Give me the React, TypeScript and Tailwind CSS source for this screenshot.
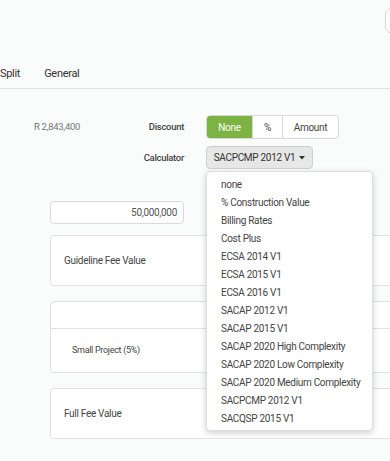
import { useState } from "react";

const calculators = [
  "none",
  "% Construction Value",
  "Billing Rates",
  "Cost Plus",
  "ECSA 2014 V1",
  "ECSA 2015 V1",
  "ECSA 2016 V1",
  "SACAP 2012 V1",
  "SACAP 2015 V1",
  "SACAP 2020 High Complexity",
  "SACAP 2020 Low Complexity",
  "SACAP 2020 Medium Complexity",
  "SACPCMP 2012 V1",
  "SACQSP 2015 V1",
];

const discountModes = ["None", "%", "Amount"];

export default function App() {
  const [discount, setDiscount] = useState("None");
  const [calculator, setCalculator] = useState("SACPCMP 2012 V1");

  return (
    <div
      className="relative h-[461px] w-[390px] overflow-hidden bg-[#fafbfb] tracking-[-0.3px] text-[#3c3c3c]"
      style={{ fontFamily: "Roboto, 'Noto Sans', sans-serif" }}
    >
      {/* header strip */}
      <div className="flex h-[60px] justify-end pt-2">
        <div className="h-[25px] w-[20px] -mr-[15px] rounded-md border border-[#d6d6d6] bg-white" />
      </div>

      <nav className="flex h-[29px] items-start gap-[24px] border-b border-[#e3e3e3] text-[11px] text-[#333]">
        <span className="pt-[6px]">Split</span>
        <span className="pt-[6px]">General</span>
      </nav>

      <div className="pl-[34px] pt-[26px]">
        <div className="flex items-start">
          <span className="w-[85px] pt-[5px] text-[9.5px] text-[#777]">R 2,843,400</span>
          <span className="w-[65px] pt-[5px] text-right text-[9.5px] font-medium text-[#444]">Discount</span>
          <div className="ml-[22px] flex h-[24px] overflow-hidden rounded border border-[#d9d9d9] bg-white text-[10px]">
            {discountModes.map((mode) => (
              <button
                key={mode}
                onClick={() => setDiscount(mode)}
                className={
                  mode === discount
                    ? "bg-[#7cb342] text-white"
                    : "border-l border-[#d9d9d9] text-[#444] first:border-l-0"
                }
                style={{ width: mode === "None" ? 45 : mode === "%" ? 30 : 56 }}
              >
                {mode}
              </button>
            ))}
          </div>
        </div>

        <div className="mt-[7px] flex items-start">
          <span className="w-[150px] pt-[5px] text-right text-[9.5px] font-medium text-[#444]">Calculator</span>
          <div className="relative ml-[22px]">
            <button className="flex h-[23px] w-[107px] items-center justify-center gap-[4px] whitespace-nowrap rounded border border-[#cfcfcf] bg-[#e7e7e7] text-[10px] text-[#333]">
              {calculator}
              <svg width="6" height="4" viewBox="0 0 6 4" className="fill-[#333]">
                <path d="M0 0h6L3 3.5z" />
              </svg>
            </button>
            <ul className="absolute left-0 top-[25px] z-10 w-[167px] rounded border border-[#dedede] bg-white py-[3px] text-[10px] text-[#444] shadow-[0_2px_6px_rgba(0,0,0,0.2)]">
              {calculators.map((name) => (
                <li
                  key={name}
                  onClick={() => setCalculator(name)}
                  className="flex h-[18px] items-center whitespace-nowrap px-[14px]"
                >
                  {name}
                </li>
              ))}
            </ul>
          </div>
        </div>

        <div className="ml-[16px] mt-[32px] flex h-[23px] w-[134px] items-center justify-end rounded border border-[#dadada] bg-white px-[6px] text-[10px] text-[#555]">
          50,000,000
        </div>

        <div className="ml-[16px] mt-[11px] flex h-[51px] w-[400px] items-center rounded border border-[#e2e2e2] bg-white px-[13px] text-[10px] text-[#444]">
          Guideline Fee Value
        </div>

        <div className="ml-[16px] mt-[15px] w-[400px] rounded border border-[#e2e2e2] bg-white">
          <div className="h-[27px] border-b border-[#e2e2e2]" />
          <div className="flex h-[43px] items-center px-[21px] text-[9px] text-[#444]">Small Project (5%)</div>
        </div>

        <div className="ml-[16px] mt-[15px] flex h-[51px] w-[400px] items-center rounded border border-[#e2e2e2] bg-white px-[13px] text-[10px] text-[#444]">
          Full Fee Value
        </div>
      </div>
    </div>
  );
}
